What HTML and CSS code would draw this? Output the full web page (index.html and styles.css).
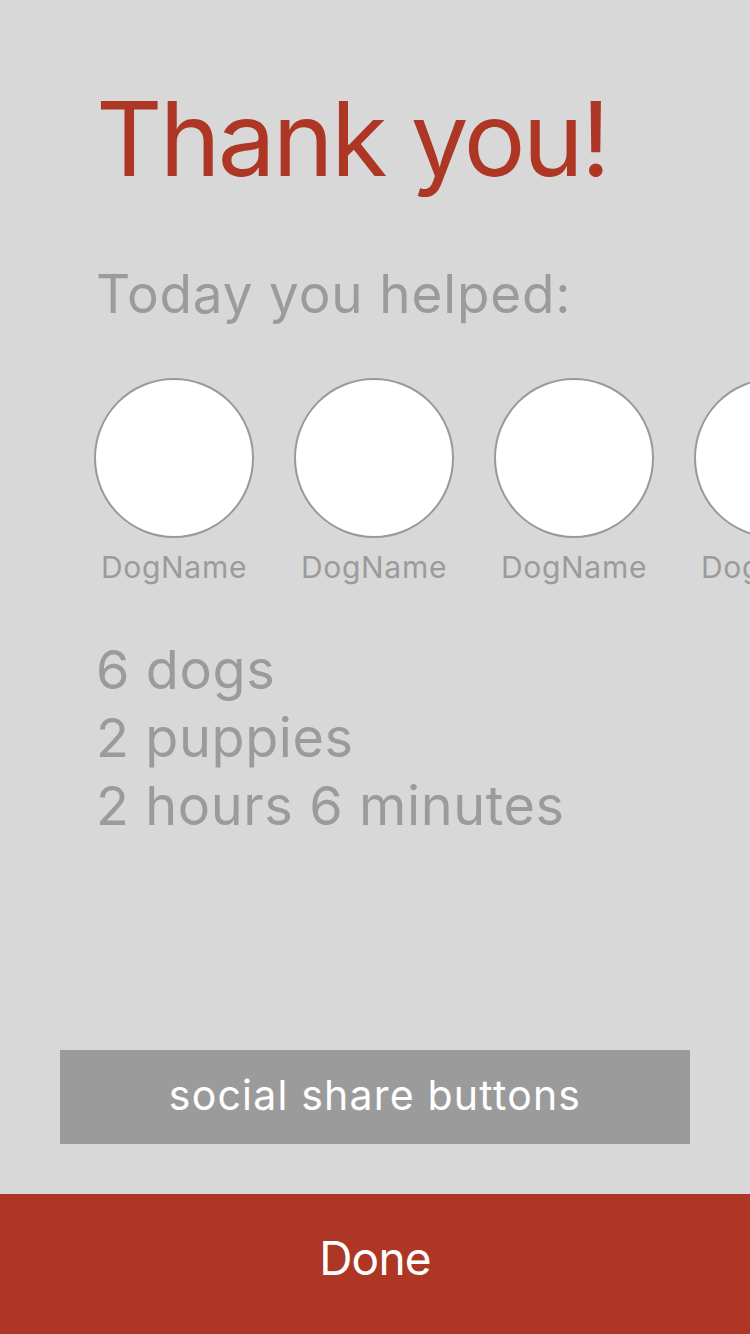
FILE: index.html
```html
<!DOCTYPE html>
<html>
<head>
<meta charset="utf-8">
<link rel="stylesheet" href="styles.css">
</head>
<body>
<div class="screen">
  <main class="content">
    <h1 class="title">Thank you!</h1>
    <p class="subtitle">Today you helped:</p>
    <div class="dogs">
      <div class="dog"><div class="avatar"></div><span class="dog-name">DogName</span></div>
      <div class="dog"><div class="avatar"></div><span class="dog-name">DogName</span></div>
      <div class="dog"><div class="avatar"></div><span class="dog-name">DogName</span></div>
      <div class="dog"><div class="avatar"></div><span class="dog-name">DogName</span></div>
    </div>
    <div class="stats">
      <div class="stat">6 dogs</div>
      <div class="stat">2 puppies</div>
      <div class="stat">2 hours 6 minutes</div>
    </div>
  </main>
  <div class="share">social share buttons</div>
  <button class="done">Done</button>
</div>
</body>
</html>
```
FILE: styles.css
```css
html, body {
  margin: 0;
  padding: 0;
  background: #d8d8d8;
}
.screen {
  width: 750px;
  height: 1334px;
  display: flex;
  flex-direction: column;
  overflow: hidden;
  font-family: Inter, "Open Sans", sans-serif;
  background: #d8d8d8;
}
.content {
  flex: 1;
  padding-left: 96px;
  overflow: hidden;
}
.title {
  margin: 84px 0 0 0;
  font-size: 103px;
  font-weight: 400;
  line-height: 110px;
  color: #ad3724;
  letter-spacing: -2.8px;
}
.subtitle {
  margin: 68px 0 0 0;
  font-size: 53px;
  line-height: 64px;
  color: #9b9b9b;
  letter-spacing: 0.85px;
}
.dogs {
  display: flex;
  gap: 40px;
  margin-top: 52px;
  margin-left: -2px;
  width: 900px;
}
.dog {
  flex: 0 0 160px;
  display: flex;
  flex-direction: column;
  align-items: center;
}
.avatar {
  width: 160px;
  height: 160px;
  box-sizing: border-box;
  border-radius: 50%;
  background: #ffffff;
  border: 2px solid #999999;
}
.dog-name {
  margin-top: 7px;
  font-size: 30px;
  line-height: 44px;
  color: #9b9b9b;
  letter-spacing: 0.7px;
  white-space: nowrap;
}
.stats {
  margin-top: 47px;
  color: #9b9b9b;
  font-size: 54px;
  line-height: 68px;
  letter-spacing: 0.6px;
}
.share {
  margin: 0 60px 50px 60px;
  height: 94px;
  padding-bottom: 4px;
  box-sizing: border-box;
  background: #9b9b9b;
  color: #ffffff;
  font-size: 41px;
  display: flex;
  align-items: center;
  justify-content: center;
  letter-spacing: 1.2px;
}
.done {
  height: 140px;
  border: none;
  background: #ad3724;
  color: #ffffff;
  font-family: inherit;
  font-size: 46px;
  letter-spacing: -0.8px;
  padding: 0 0 12px 0;
  cursor: pointer;
}
```
